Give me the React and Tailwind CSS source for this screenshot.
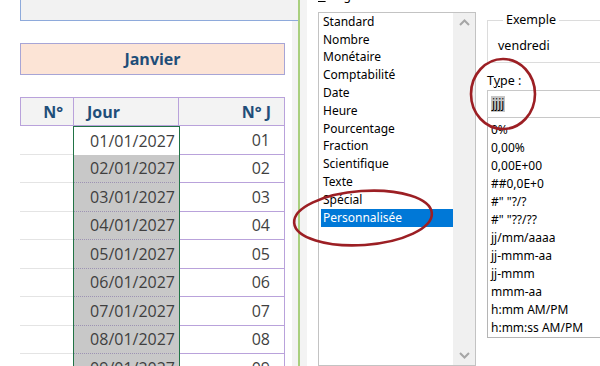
import React from "react";

const cats = ["Standard","Nombre","Monétaire","Comptabilité","Date","Heure","Pourcentage","Fraction","Scientifique","Texte","Spécial","Personnalisée"];
const types = ["0%","0,00%","0,00E+00","##0,0E+0",'#" "?/?','#" "??/??',"jj/mm/aaaa","jj-mmm-aa","jj-mmm","mmm-aa","h:mm AM/PM","h:mm:ss AM/PM"];
const rows = ["01","02","03","04","05","06","07","08","09"];

function Chevron({ up }) {
  return (
    <svg width="11" height="7" viewBox="0 0 11 7">
      <polyline points={up ? "1,6 5.5,1.5 10,6" : "1,1 5.5,5.5 10,1"} fill="none" stroke="#a6a6a6" strokeWidth="2" />
    </svg>
  );
}

export default function App() {
  return (
    <div className="relative w-[600px] h-[366px] overflow-hidden bg-white flex">
      {/* Spreadsheet */}
      <div className="w-[298px] shrink-0 flex flex-col pl-[20px] font-['Open_Sans',sans-serif] bg-[linear-gradient(to_right,#ffffff_292px,#f3f3f3_292px)]">
        <div className="h-[21px] shrink-0 bg-[#f2f2f2] border-l border-b border-[#8eaadb]" />
        <div className="mt-[22px] h-[32px] w-[265px] shrink-0 bg-[#fce4d6] border border-[#a7a5d6] flex items-center justify-center text-[16px] font-bold text-[#1f4e79]">
          Janvier
        </div>
        <div className="mt-[22px] w-[265px] h-[29px] shrink-0 flex bg-[#f3f3f3] border border-[#b9a2db] text-[16px] font-bold text-[#1f4e79]">
          <div className="w-[53px] flex items-center justify-end pr-[10px] border-r border-[#b9a2db]">N°</div>
          <div className="w-[105px] flex items-center pl-[13px] border-r border-[#b9a2db]">Jour</div>
          <div className="flex-1 flex items-center justify-end pr-[13px]">N° J</div>
        </div>
        {rows.map((r, i) => (
          <div key={r} className="w-[265px] h-[28.5px] shrink-0 flex text-[16px] text-[#3f3f3f]">
            <div className="w-[53px] border-b border-[#e4e4e4]" />
            <div className={`w-[107px] flex items-center justify-end pr-[4px] border-l-[1.5px] border-r-[1.5px] border-[#217346] ${i === 0 ? "bg-white border-t-[1.5px]" : "bg-[#c8c8c8]"}`}>
              <div className={`w-full h-full flex items-center justify-end ${i === 0 ? "" : "border-b border-dotted border-[#9d93b3]"}`}>{r}/01/2027</div>
            </div>
            <div className="flex-1 flex items-center justify-end pr-[14px] border-b border-r border-[#b9a2db]">{r}</div>
          </div>
        ))}
      </div>

      {/* green separator */}
      <div className="w-[2px] shrink-0 bg-[#a9cf7e]" />

      {/* Dialog */}
      <div className="flex-1 flex bg-white font-['Noto_Sans',sans-serif] text-[12px] text-black">
        <div className="w-[7px] shrink-0 bg-[#f3f3f3]" />
        <div className="w-[11px] shrink-0" />
        {/* category list */}
        <div className="w-[158px] shrink-0 flex flex-col">
          <div className="h-[12px] -mt-[10px] leading-[12px]"><span className="underline">C</span>atégorie :</div>
          <div className="mt-[10px] h-[356px] border border-[#c3c3c3] flex">
            <div className="flex-1 flex flex-col">
              {cats.map((c) => (
                <div key={c} className={`h-[17.8px] shrink-0 ml-[2px] pl-[2px] flex items-center leading-none ${c === "Personnalisée" ? "bg-[#0078d7] text-white" : ""}`}>{c}</div>
              ))}
            </div>
            <div className="w-[22px] bg-[#f0f0f0] flex flex-col items-center justify-between py-[6px]">
              <Chevron up />
              <Chevron />
            </div>
          </div>
        </div>
        <div className="w-[11px] shrink-0" />
        {/* right column */}
        <div className="w-[140px] shrink-0 flex flex-col">
          <fieldset className="mt-[12px] h-[51px] border border-[#dcdcdc] pl-[10px]">
            <legend className="ml-[5px] px-[3px] text-[12.5px] leading-[16px]">Exemple</legend>
            <div className="mt-[10px] leading-[16px] text-[12.5px]">vendredi</div>
          </fieldset>
          <div className="mt-[10px] h-[16px] leading-[16px] text-[12.5px]">T<span className="underline">y</span>pe :</div>
          <div className="mt-[1px] h-[28px] border border-[#c8c8c8] flex items-center pl-[3px]">
            <span className="bg-[#c6c6c6] leading-[16px] px-[1px]">jjjj</span>
          </div>
          <div className="h-[220px] border-l border-b border-[#b5b5b5] pt-[3px] pl-[3px] flex flex-col">
            {types.map((t) => (
              <div key={t} className="h-[18px] shrink-0 flex items-center leading-none whitespace-pre">{t}</div>
            ))}
          </div>
        </div>
      </div>

      {/* red annotation ellipses */}
      <svg className="absolute inset-0 pointer-events-none" width="600" height="366" viewBox="0 0 600 366">
        <ellipse cx="363" cy="218" rx="69" ry="27" transform="rotate(-4 363 218)" fill="none" stroke="#9c1f24" strokeWidth="2.6" />
        <ellipse cx="503" cy="94" rx="32" ry="35" fill="none" stroke="#9c1f24" strokeWidth="2.6" />
      </svg>
    </div>
  );
}
